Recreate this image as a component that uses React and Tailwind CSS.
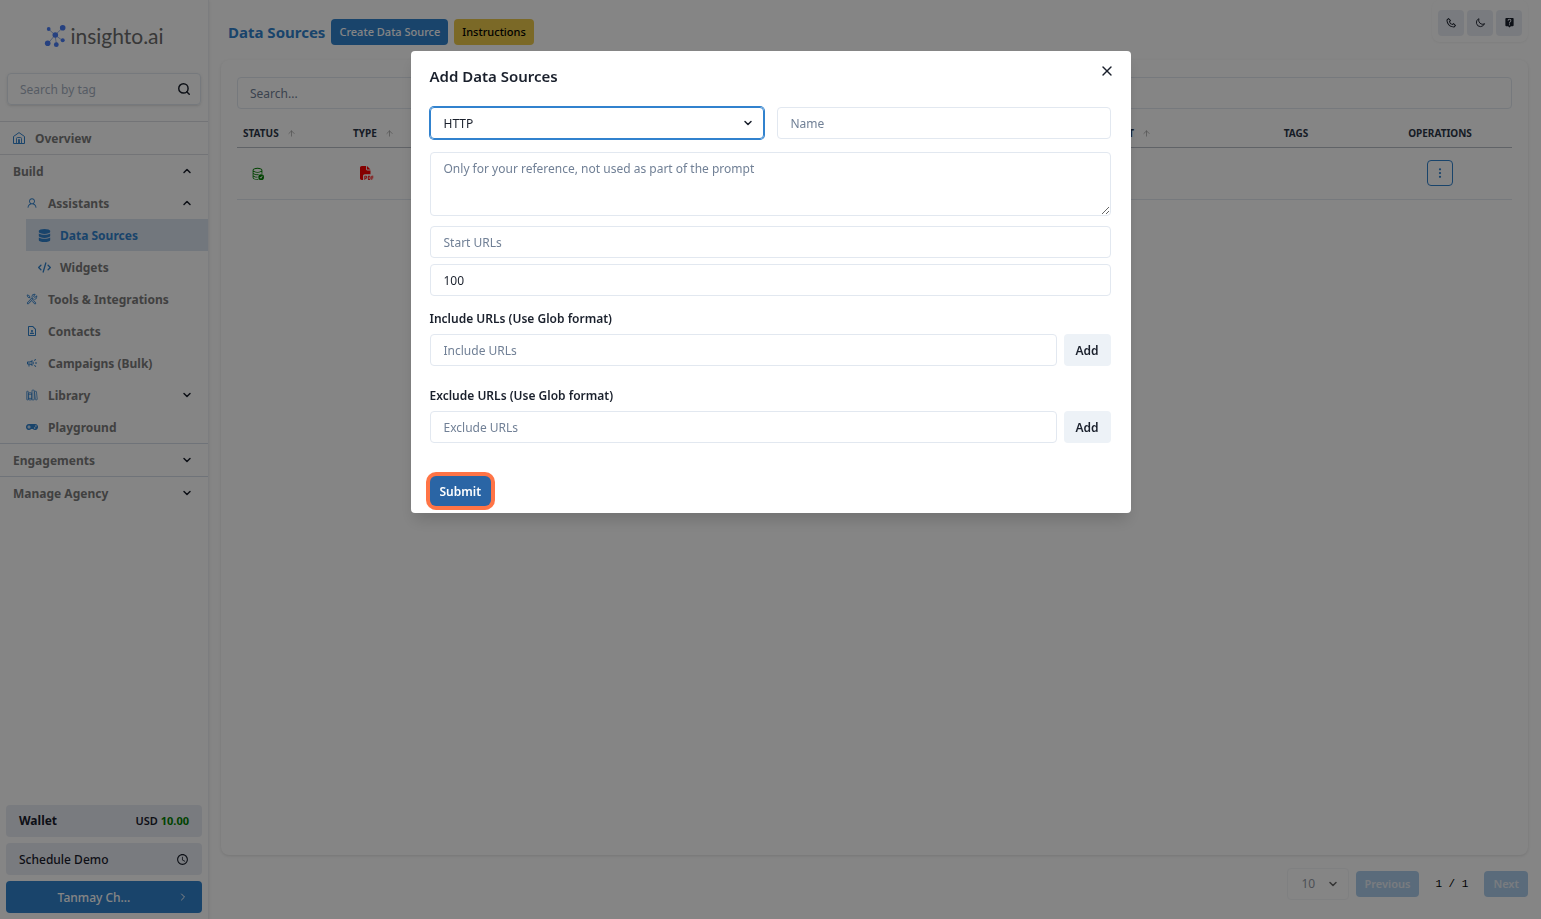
import React from "react";
import { IoLibraryOutline } from "react-icons/io5";
import { AiOutlineUser } from "react-icons/ai";
import { BsDatabaseCheck, BsThreeDotsVertical } from "react-icons/bs";
import { FaDatabase, FaGamepad } from "react-icons/fa";
import { FaCode, FaFilePdf } from "react-icons/fa6";
import {
  MdAccessTime,
  MdLiveHelp,
  MdOutlineCampaign,
  MdOutlineContactPage,
} from "react-icons/md";
import { VscTools } from "react-icons/vsc";
import { HiOutlineMoon } from "react-icons/hi";
import { BiPhone } from "react-icons/bi";
import { ArrowUp, ChevronDown, ChevronRight, ChevronUp, Search, X } from "lucide-react";

const field =
  "block h-8 w-full rounded border border-[#e2e8f0] bg-white px-[13px] pt-px text-xs text-[#1a202c] placeholder:text-[#718096] outline-none";

function HomeIcon({ size }) {
  return (
    <svg width={size} height={size} viewBox="0 0 12 12" fill="none" stroke="currentColor" aria-hidden="true">
      <path d="M.5 4.500 6 .6l5.500 3.900v7H.5z" strokeLinejoin="round" />
      <path d="M3.500 11.500V6.500Q3.500 5.500 4.500 5.500h3Q8.500 5.500 8.500 6.500v5M5.500 11.500V7.500h1v4" strokeWidth="0.900" />
    </svg>
  );
}

function Logo() {
  return (
    <div className="flex h-[71px] items-center justify-center gap-1">
      <svg width="22" height="24" viewBox="0 0 22 24" aria-hidden="true">
        <path
          d="M4.5 5 11 11 18.5 4M11 11 4 19.5M11 11l1.500 9.500M11 11l7.500 5.500"
          fill="none"
          stroke="#9db4e6"
        />
        <g fill="#4a7df5">
          <circle cx="4.700" cy="5" r="1.900" />
          <circle cx="18.700" cy="3.700" r="2.800" />
          <circle cx="11.300" cy="11" r="2.800" />
          <circle cx="3.700" cy="19.300" r="2.800" />
          <circle cx="12.300" cy="20.700" r="2.400" />
          <circle cx="18.700" cy="16.300" r="2" />
        </g>
      </svg>
      <span className="font-['Lato',sans-serif] text-[21px] leading-6 text-[#6b6b6b]">insighto.ai</span>
    </div>
  );
}

function NavItem({ icon: Icon, label, indent, chevron: Chevron, active, iconSize = 12 }) {
  return (
    <a
      href="#"
      className={`flex h-8 items-center pr-[15px] text-xs font-bold ${indent} ${
        active ? "bg-[#dbe4f0] text-[#3182ce]" : "text-[#7c7c7c]"
      }`}
    >
      {Icon && (
        <span className="w-[22px] shrink-0 text-[#3182ce]">
          <Icon size={iconSize} />
        </span>
      )}
      <span className="flex-1 pt-px">{label}</span>
      {Chevron && <Chevron size={12} strokeWidth={3} className="text-[#1a202c]" />}
    </a>
  );
}

function Sidebar() {
  return (
    <aside className="flex w-[209px] shrink-0 flex-col border-r border-[#edf0f4] shadow-sm">
      <Logo />
      <div className="mx-[7px] mt-[2px] flex h-8 items-center rounded border border-[#e2e8f0] px-3 shadow-sm">
        <input
          type="text"
          aria-label="Search by tag"
          placeholder="Search by tag"
          className="min-w-0 flex-1 bg-transparent pt-px text-xs outline-none placeholder:text-[#a6b0bf]"
        />
        <Search size={14} strokeWidth={2.5} className="-mr-[3px] text-[#1a202c]" />
      </div>
      <nav className="mt-4">
        <div className="border-y border-[#dcdfe4]">
          <NavItem icon={HomeIcon} label="Overview" indent="pl-[13px]" />
        </div>
        <NavItem label="Build" indent="pl-[13px]" chevron={ChevronUp} />
        <NavItem icon={AiOutlineUser} label="Assistants" indent="pl-[26px]" chevron={ChevronUp} />
        <div className="pl-[26px]">
          <NavItem icon={FaDatabase} label="Data Sources" indent="pl-3" active iconSize={13} />
          <NavItem icon={FaCode} label="Widgets" indent="pl-3" iconSize={13} />
        </div>
        <NavItem icon={VscTools} label="Tools & Integrations" indent="pl-[26px]" />
        <NavItem icon={MdOutlineContactPage} label="Contacts" indent="pl-[26px]" />
        <NavItem icon={MdOutlineCampaign} label="Campaigns (Bulk)" indent="pl-[26px]" />
        <NavItem icon={IoLibraryOutline} label="Library" indent="pl-[26px]" chevron={ChevronDown} />
        <NavItem icon={FaGamepad} label="Playground" indent="pl-[26px]" />
        <div className="border-y border-[#d5dde8]">
          <NavItem label="Engagements" indent="pl-[13px]" chevron={ChevronDown} />
        </div>
        <NavItem label="Manage Agency" indent="pl-[13px]" chevron={ChevronDown} />
      </nav>
      <div className="mt-auto flex flex-col gap-[6px] px-[6px] pb-[6px] text-xs text-[#1a202c]">
        <button className="flex h-8 items-center justify-between rounded bg-[#e9ecf4] px-[13px] font-bold">
          <span>Wallet</span>
          <span className="text-[11px] font-semibold">
            USD <span className="font-bold text-[#008000]">10.00</span>
          </span>
        </button>
        <button className="flex h-8 items-center justify-between rounded bg-[#e9ecf4] px-[13px] font-medium">
          <span className="pt-px">Schedule Demo</span>
          <MdAccessTime size={13} />
        </button>
        <button className="flex h-8 items-center rounded bg-[#3182ce] px-[13px] font-medium text-white">
          <span className="flex-1 pt-px pr-2">Tanmay Ch...</span>
          <ChevronRight size={12} strokeWidth={2} />
        </button>
      </div>
    </aside>
  );
}

function IconButton({ label, children }) {
  return (
    <button
      aria-label={label}
      className="flex size-[26px] items-center justify-center rounded bg-[#e9ecf4] text-[#1a202c]"
    >
      {children}
    </button>
  );
}

function SortHead({ children }) {
  return (
    <span className="flex items-center gap-2">
      {children}
      <ArrowUp size={9} className="text-[#a0a0a0]" />
    </span>
  );
}

function DataSources() {
  return (
    <main className="flex min-w-0 flex-1 flex-col pr-[13px] pl-3">
      <header className="flex h-[60px] items-start justify-between pl-[7px]">
        <div className="flex h-16 items-center">
          <h1 className="text-[15px] font-bold text-[#3182ce]">Data Sources</h1>
          <button className="ml-[6px] flex h-[26px] items-center rounded bg-[#3182ce] px-2 text-[11px] font-medium text-white">
            Create Data Source
          </button>
          <button className="ml-[6px] flex h-[26px] items-center rounded bg-[#ecc94b] px-2 text-[11px] font-medium text-black">
            Instructions
          </button>
        </div>
        <div className="flex h-[42px] items-center gap-[3px] rounded-lg px-[6px] pt-[3px] shadow-xs">
          <IconButton label="Call">
            <BiPhone size={12} />
          </IconButton>
          <IconButton label="Dark mode">
            <HiOutlineMoon size={11} />
          </IconButton>
          <IconButton label="Help">
            <MdLiveHelp size={11} />
          </IconButton>
        </div>
      </header>
      <section className="flex-1 rounded-lg px-4 pt-[17px] shadow-[0_1px_3px_rgba(0,0,0,0.12)]">
        <input
          type="text"
          aria-label="Search"
          placeholder="Search..."
          className="block h-8 w-full rounded border border-[#e2e8f0] px-3 text-xs outline-none placeholder:text-[#718096]"
        />
        <table className="mt-3 w-full table-fixed text-left text-[10px] text-[#2d3748]">
          <thead>
            <tr className="h-[26px] border-b border-[#b9bec6] font-bold">
              <th className="w-[110px] pl-[6px]">
                <SortHead>STATUS</SortHead>
              </th>
              <th className="pl-[6px]">
                <SortHead>TYPE</SortHead>
              </th>
              <th className="w-[160px] pl-3">
                <SortHead>CREATED AT</SortHead>
              </th>
              <th className="w-36 text-center">TAGS</th>
              <th className="w-36 text-center">OPERATIONS</th>
            </tr>
          </thead>
          <tbody>
            <tr className="h-[52px] border-b border-[#e2e8f0]">
              <td className="pl-[14px]">
                <BsDatabaseCheck size={13} className="text-[#008000]" />
              </td>
              <td className="pl-[13px]">
                <FaFilePdf size={14} className="text-[#ff0000]" />
              </td>
              <td />
              <td />
              <td>
                <button
                  aria-label="Row operations"
                  className="mx-auto flex size-[26px] items-center justify-center rounded border border-[#3182ce] text-[#3182ce]"
                >
                  <BsThreeDotsVertical size={12} />
                </button>
              </td>
            </tr>
          </tbody>
        </table>
      </section>
      <footer className="flex h-16 shrink-0 items-center justify-end pb-[6px] text-[11px] font-semibold">
        <div className="relative mr-[7px] opacity-60">
          <select
            aria-label="Rows per page"
            className="block h-8 w-[62px] appearance-none rounded border border-[#edf0f4] pl-[14px] text-xs font-normal text-[#4a5568]"
          >
            <option>10</option>
          </select>
          <ChevronDown size={12} strokeWidth={3} className="pointer-events-none absolute top-[10px] right-[10px]" />
        </div>
        <button className="h-[26px] rounded bg-[#adcdeb] px-[9px] text-[#e8eef5]">Previous</button>
        <span className="mx-4 font-['Liberation_Mono',monospace] text-[11px] font-normal text-black">
          1 / 1
        </span>
        <button className="h-[26px] rounded bg-[#adcdeb] px-[9px] text-[#e8eef5]">Next</button>
      </footer>
    </main>
  );
}

function UrlList({ id, label, placeholder }) {
  return (
    <div>
      <label htmlFor={id} className="block text-xs leading-4 font-semibold">
        {label}
      </label>
      <div className="mt-[7px] flex gap-[7px]">
        <input id={id} type="text" placeholder={placeholder} className={field} />
        <button
          type="button"
          className="h-8 w-[47px] shrink-0 rounded bg-[#edf2f7] pt-px text-xs font-semibold"
        >
          Add
        </button>
      </div>
    </div>
  );
}

function AddDataSourceDialog() {
  return (
    <div className="fixed inset-0 flex items-start justify-center bg-black/48 pt-[51px]">
      <form
        role="dialog"
        aria-modal="true"
        aria-labelledby="dialog-title"
        onSubmit={(e) => e.preventDefault()}
        className="w-[720px] rounded bg-white pr-5 pb-[7px] pl-[19px] text-[#1a202c] shadow-[0_10px_15px_-3px_rgba(0,0,0,0.15)]"
      >
        <div className="-mr-2 flex h-14 items-start justify-between pt-2">
          <h2 id="dialog-title" className="pt-[6px] text-[15px] leading-[22px] font-semibold">
            Add Data Sources
          </h2>
          <button type="button" aria-label="Close" className="flex size-6 items-center justify-center">
            <X size={16} strokeWidth={2} />
          </button>
        </div>
        <div className="grid grid-cols-2 gap-[13px]">
          <div className="relative">
            <select
              aria-label="Data source type"
              className="block h-8 w-full appearance-none rounded border border-[#3182ce] px-[13px] pt-px text-xs shadow-[0_0_0_1px_#3182ce] outline-none"
            >
              <option>HTTP</option>
            </select>
            <ChevronDown
              size={12}
              strokeWidth={3}
              className="pointer-events-none absolute top-[10px] right-[10px]"
            />
          </div>
          <input type="text" aria-label="Name" placeholder="Name" className={field} />
        </div>
        <textarea
          aria-label="Description"
          placeholder="Only for your reference, not used as part of the prompt"
          className="mt-[13px] block h-16 w-full resize rounded border border-[#e2e8f0] px-[13px] py-2 text-xs outline-none placeholder:text-[#718096]"
        />
        <input type="text" aria-label="Start URLs" placeholder="Start URLs" className={`${field} mt-[10px]`} />
        <input type="text" aria-label="Maximum pages" defaultValue="100" className={`${field} mt-[6px]`} />
        <div className="mt-[15px] flex flex-col gap-[22px]">
          <UrlList id="include-urls" label="Include URLs (Use Glob format)" placeholder="Include URLs" />
          <UrlList id="exclude-urls" label="Exclude URLs (Use Glob format)" placeholder="Exclude URLs" />
        </div>
        <button
          type="submit"
          className="mt-[33px] block h-[30px] rounded-md bg-[#2a65a5] px-[10px] pt-px text-xs font-semibold text-white ring-4 ring-[#ff7446]"
        >
          Submit
        </button>
      </form>
    </div>
  );
}

export default function App() {
  return (
    <div className="flex min-h-screen bg-white font-['Noto_Sans',sans-serif]">
      <Sidebar />
      <DataSources />
      <AddDataSourceDialog />
    </div>
  );
}
